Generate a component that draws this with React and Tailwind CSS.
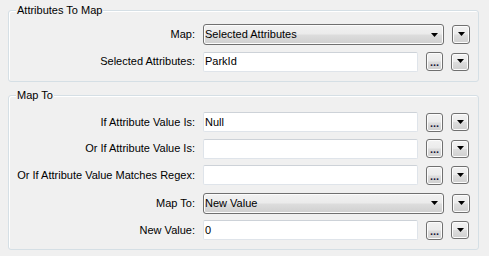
import React from "react";

const Tri = ({ className = "" }) => (
  <svg width="7" height="4" viewBox="0 0 7 4" className={className}>
    <path d="M0 0H7L3.5 4Z" fill="#000" />
  </svg>
);

const btnBg =
  "bg-[linear-gradient(#f2f2f2_0%,#ebebeb_48%,#dddddd_52%,#cfcfcf_100%)] border border-[#707070] rounded-[3px] shadow-[inset_0_0_0_1px_#fcfcfc]";

const ArrowButton = ({ h = "h-[18px]" }) => (
  <button className={`ml-[8px] w-[18px] ${h} ${btnBg} flex items-center justify-center pb-[1px]`}>
    <Tri />
  </button>
);

const DotsButton = () => (
  <button className={`ml-[8px] w-[17px] h-[19px] ${btnBg} flex items-end justify-center pb-[2px] text-[11px] leading-[11px] font-bold text-[#1a1a3a]`}>
    ...
  </button>
);

const Label = ({ children }) => (
  <div className="w-[187px] text-right pr-[1px] whitespace-nowrap">{children}</div>
);

const FieldRow = ({ label, value, className }) => (
  <div className={`flex items-center ${className}`}>
    <Label>{label}</Label>
    <div className="ml-[7px] w-[215px] h-[20px] bg-white border border-[#dfe4ea] border-t-[#cdd2d8] rounded-[2px] flex items-center pl-[1px]">
      {value}
    </div>
    <DotsButton />
    <ArrowButton />
  </div>
);

const ComboRow = ({ label, value, className }) => (
  <div className={`flex items-center ${className}`}>
    <Label>{label}</Label>
    <div className={`ml-[7px] w-[241px] h-[21px] ${btnBg} flex items-center pl-[1px] pr-[5px]`}>
      <span className="flex-1">{value}</span>
      <Tri />
    </div>
    <ArrowButton h="h-[19px]" />
  </div>
);

const Group = ({ title, className, children }) => (
  <div
    className={`relative w-[471px] border border-[#d5dfe5] rounded-[3px] shadow-[inset_1px_1px_0_#ffffff] ${className}`}
  >
    <span className="absolute -top-[8px] left-[7px] px-[1px] bg-[#f0f0f0] leading-[14px]">
      {title}
    </span>
    {children}
  </div>
);

export default function App() {
  return (
    <div className="w-[489px] h-[256px] bg-[#f0f0f0] pt-[10px] pl-[8px] font-['Liberation_Sans',Arial,sans-serif] text-[11px] text-black overflow-hidden">
      <Group title="Attributes To Map" className="h-[72px] pt-[10px]">
        <ComboRow label="Map:" value="Selected Attributes" className="h-[27px]" />
        <FieldRow label="Selected Attributes:" value="ParkId" className="h-[27px]" />
      </Group>
      <Group title="Map To" className="mt-[13px] h-[155px] pt-[13px]">
        <FieldRow label="If Attribute Value Is:" value="Null" className="h-[26px]" />
        <FieldRow label="Or If Attribute Value Is:" value="" className="h-[27px]" />
        <FieldRow label="Or If Attribute Value Matches Regex:" value="" className="h-[26px]" />
        <ComboRow label="Map To:" value="New Value" className="h-[30px]" />
        <FieldRow label="New Value:" value="0" className="h-[24px]" />
      </Group>
    </div>
  );
}
